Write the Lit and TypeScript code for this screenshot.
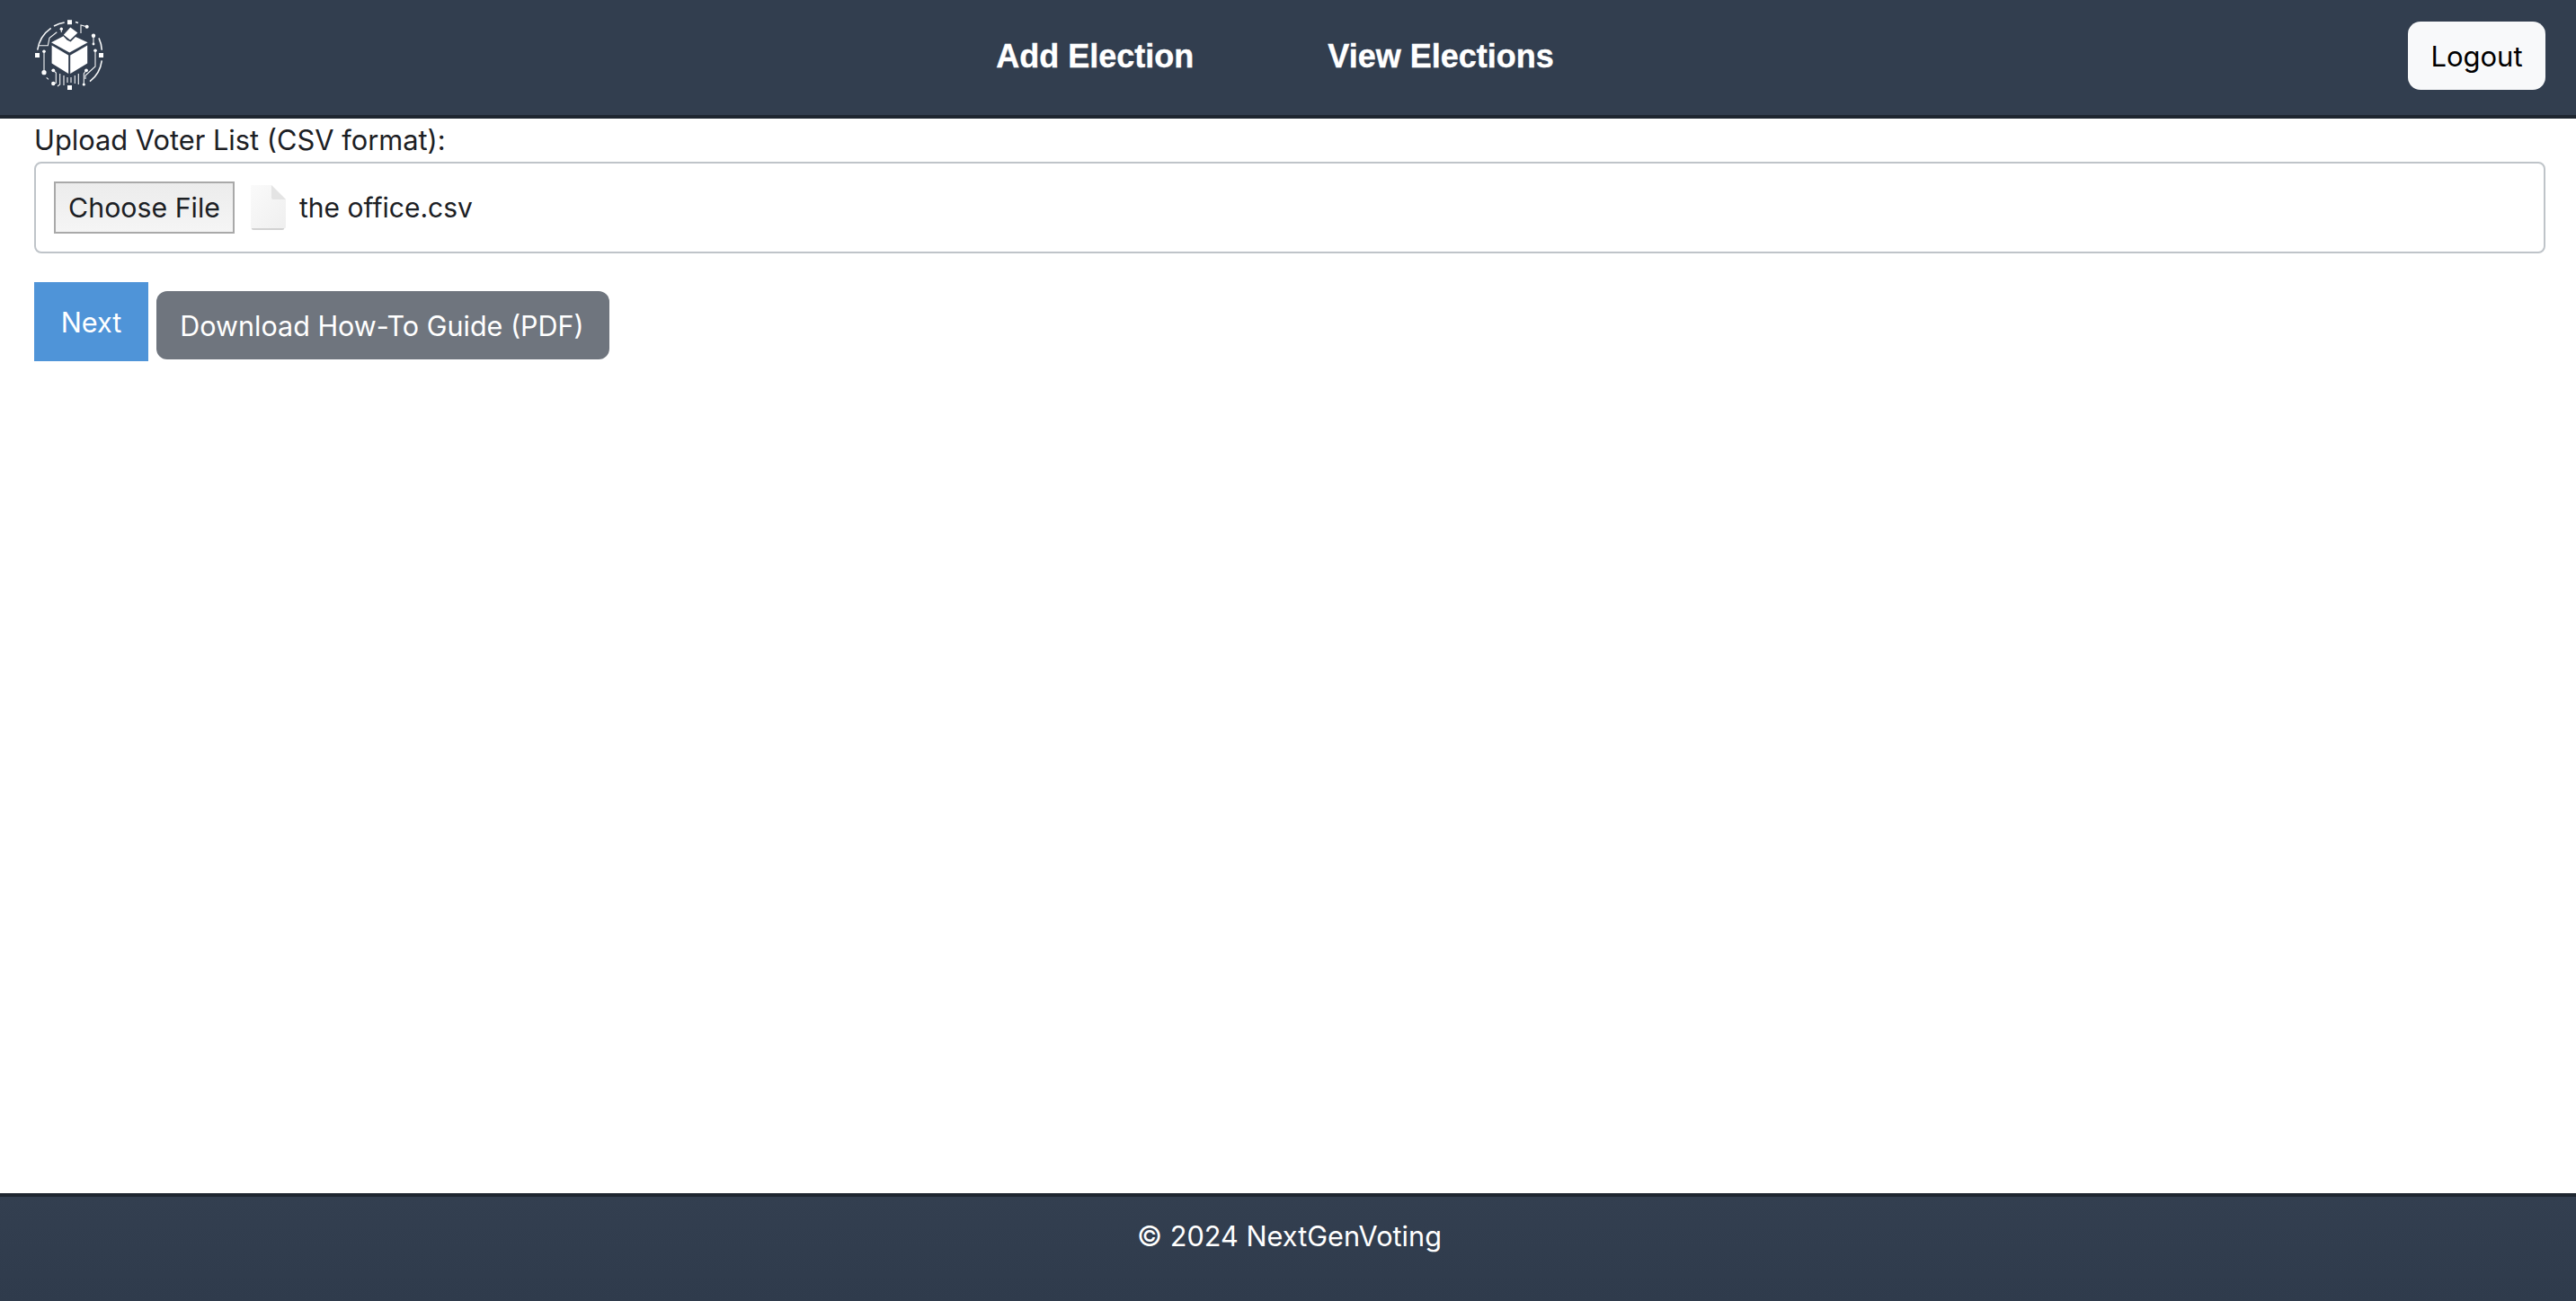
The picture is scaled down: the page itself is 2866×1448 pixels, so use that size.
import { LitElement, html, css, svg } from "lit";
import { customElement } from "lit/decorators.js";

const logo = svg`<svg class="logo" viewBox="0 0 78 78" fill="none" stroke="#f4f5f6" stroke-width="1.1" aria-hidden="true">
  <g fill="#fff" stroke="none">
    <rect x="37" y="0.2" width="5" height="5"/><rect x="37" y="73" width="5" height="5"/>
    <rect x="1" y="37" width="5" height="5"/><rect x="72" y="37" width="5" height="5"/>
    <path d="M19.6 28.6 L38.2 39.4 V60 L19.6 48.4 Z"/><path d="M40.2 39.4 L59.2 28.6 V48.4 L40.2 60 Z"/>
    <path d="M19 25.3 L32.5 18.3 L36.5 22.6 L40.5 24.6 L46 19 L59.6 25.3 L39.3 36.6 Z"/>
    <path d="M40.3 8.6 L48.4 14.6 L40 22.4 L32.8 16.8 Z"/>
    <circle cx="58.7" cy="7.7" r="2"/><circle cx="66" cy="17.7" r="2.2"/><circle cx="66" cy="27" r="1.4"/><circle cx="68" cy="34.3" r="1.8"/>
    <circle cx="11" cy="35.3" r="1.8"/><circle cx="11" cy="58.7" r="2.6"/><circle cx="21.3" cy="56.3" r="1.9"/><circle cx="58" cy="56.3" r="1.9"/>
    <circle cx="30.3" cy="10.3" r="1.7"/><circle cx="21.3" cy="71" r="2.2"/><circle cx="55.3" cy="72" r="1.6"/>
  </g>
  <path d="M3.7 33.7 A36 36 0 0 1 18.7 9.3" stroke-width="1.6"/>
  <path d="M22 7 A36 36 0 0 1 33.7 3" stroke-width="1.6"/>
  <path d="M46 2.6 A36 36 0 0 1 49 3.6" stroke-width="1.6"/>
  <path d="M72 20.3 A36 36 0 0 1 75.3 33.7" stroke-width="1.6"/>
  <path d="M75.3 45.3 A36 36 0 0 1 62 68.7" stroke-width="1.6"/>
  <path d="M11 35.3 V58.7 M13.7 64.3 L16 66.3"/>
  <path d="M68 34.3 V52 L57 62 V66"/>
  <path d="M5.3 28.7 H15.3 L17 20.3 L25.3 13.7"/>
  <path d="M30.3 10.3 V14"/>
  <path d="M58.7 7.7 L52 6 V15"/><path d="M66 17.7 V27"/>
  <path d="M21.3 56.3 L24.3 59 V70.3 L21.3 71 M58 56.3 L55.3 60 V72"/>
  <path d="M28.7 60 V72 L26 74 M33 62 V73 M37 64 V70 M41 64 V70 M45.3 62 V71 M49.3 60 V72"/>
</svg>`;

const doc = svg`<svg class="doc" viewBox="0 0 40 50" aria-hidden="true">
  <defs><linearGradient id="d" x1="0" y1="0" x2="1" y2="1"><stop offset="0" stop-color="#fafafa"/><stop offset="1" stop-color="#efefef"/></linearGradient></defs>
  <path d="M2 47 H38 Q39 50 36 50 H4 Q1 50 2 47 Z" fill="#d2d2d2"/>
  <path d="M1 1 Q1 0 2 0 H24 L40 16 V47 Q40 48 39 48 H2 Q1 48 1 47 Z" fill="url(#d)"/>
  <path d="M24 0 L40 16 H26 Q24 16 24 14 Z" fill="#e4e4e4"/>
</svg>`;

@customElement("app-root")
export class AppRoot extends LitElement {
  static styles = css`
    :host {
      display: flex;
      flex-direction: column;
      min-height: 1448px;
      font-family: Inter, "Liberation Sans", sans-serif;
      font-size: 32px;
      color: #1c2024;
      background: #fff;
    }
    .head {
      box-sizing: border-box;
      height: 132px;
      background: #323e4f;
      border-bottom: 4px solid #1e2630;
      padding: 0 34px 4px 38px;
      display: flex;
      align-items: center;
      justify-content: space-between;
    }
    .logo { width: 78px; height: 78px; display: block; margin-top: -3px; }
    .nav { display: flex; gap: 109px; margin-left: 42px; padding-top: 2px; }
    .nav a {
      padding: 0 20px;
      color: #fff;
      font: bold 36px "Liberation Sans", sans-serif;
      -webkit-text-stroke: 0.4px #fff;
    }
    .logout {
      box-sizing: border-box;
      width: 153px;
      height: 76px;
      background: #f8f9fa;
      color: #000;
      border-radius: 14px;
      display: flex;
      align-items: center;
      justify-content: center;
      font-size: 31px;
    }
    .main { flex: 1; padding: 0 34px 0 38px; }
    .label { display: block; height: 48px; line-height: 48px; font-size: 30.8px; }
    .file {
      box-sizing: border-box;
      height: 102px;
      border: 2px solid #bfc4c9;
      border-radius: 8px;
      padding: 0 20px;
      display: flex;
      align-items: center;
    }
    .choose {
      box-sizing: border-box;
      width: 201px;
      height: 58px;
      border: 2px solid #a9a9a9;
      background: linear-gradient(#ececec, #f5f5f5);
      display: flex;
      align-items: center;
      justify-content: center;
      font-size: 30.3px;
    }
    .doc { width: 40px; height: 50px; margin: 0 15px 0 17px; display: block; }
    .name { font-size: 30px; }
    .actions { display: flex; align-items: flex-start; gap: 9px; margin-top: 32px; }
    .next {
      box-sizing: border-box;
      width: 127px;
      height: 88px;
      background: #4f94d8;
      color: #fff;
      display: flex;
      align-items: center;
      justify-content: center;
      font-size: 30.7px;
    }
    .guide {
      box-sizing: border-box;
      width: 504px;
      height: 76px;
      margin-top: 10px;
      padding-right: 2px;
      background: #6f757e;
      color: #fff;
      border-radius: 12px;
      display: flex;
      align-items: center;
      justify-content: center;
      font-size: 30.5px;
    }
    .foot {
      box-sizing: border-box;
      height: 120px;
      border-top: 4px solid #1e2630;
      background: linear-gradient(#333f50, #2f3b4c);
      color: #fff;
      text-align: center;
      font-size: 30.7px;
      padding: 26px 0 0 3px;
      line-height: 36px;
    }
  `;

  render() {
    return html`
      <header class="head">
        ${logo}
        <nav class="nav"><a>Add Election</a><a>View Elections</a></nav>
        <div class="logout">Logout</div>
      </header>
      <main class="main">
        <label class="label">Upload Voter List (CSV format):</label>
        <div class="file">
          <div class="choose">Choose File</div>
          ${doc}
          <span class="name">the office.csv</span>
        </div>
        <div class="actions">
          <div class="next">Next</div>
          <div class="guide">Download How-To Guide (PDF)</div>
        </div>
      </main>
      <footer class="foot">© 2024 NextGenVoting</footer>
    `;
  }
}
